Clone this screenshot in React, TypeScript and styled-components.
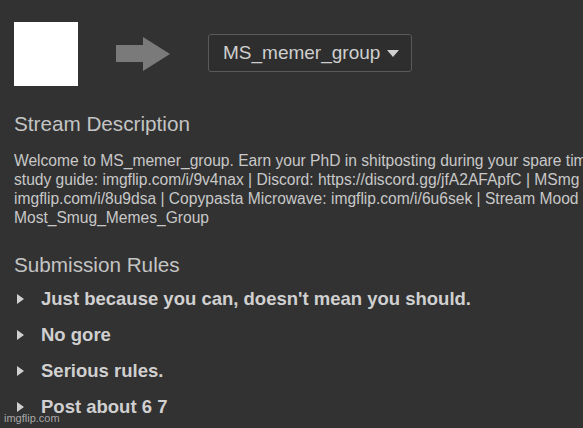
import styled, { createGlobalStyle } from "styled-components";

const GlobalStyle = createGlobalStyle`
    html, body {
        margin: 0;
        padding: 0;
        background: #323232;
        overflow: hidden;
    }
    body {
        font-family: "Liberation Sans", Arial, sans-serif;
        color: #cccccc;
    }
`

const Page = styled.div`
    position: relative;
    width: 583px;
    height: 428px;
    padding: 22px 14px 0;
    box-sizing: border-box;
`

/* Header: template image -> stream picker */

const Header = styled.div`
    display: flex;
    align-items: center;
    height: 64px;
    gap: 38px;
`

const Thumb = styled.div`
    width: 64px;
    height: 64px;
    background: #ffffff;
`

const Arrow = () => (
    <svg width="54" height="34" viewBox="0 0 54 34">
        <polygon points="0,8 27,8 27,0 54,17 27,34 27,25 0,25" fill="#7a7a7a" />
    </svg>
)

const StreamSelect = styled.button`
    display: flex;
    align-items: center;
    gap: 7px;
    height: 38px;
    margin-bottom: 3px;
    padding: 0 12px 0 14px;
    background: #2e2e2e;
    border: 1px solid #5a5a5a;
    border-radius: 3px;
    color: #cfcfcf;
    font-family: "Liberation Sans", Arial, sans-serif;
    font-size: 19px;
`

const Caret = styled.span`
    width: 0;
    height: 0;
    margin-top: 1px;
    border-left: 6px solid transparent;
    border-right: 6px solid transparent;
    border-top: 7px solid #d0d0d0;
`

/* Sections */

const SectionTitle = styled.h2<{ $top: number }>`
    margin: ${({ $top }) => $top}px 0 0;
    font-size: 20.7px;
    line-height: 24px;
    font-weight: normal;
    color: #c4c4c4;
`

const Description = styled.p`
    margin: 15px 0 0;
    font-size: 15.6px;
    line-height: 19px;
    white-space: nowrap;
    color: #c8c8c8;
`

const Rules = styled.ul`
    list-style: none;
    margin: 12px 0 0;
    padding: 0;
`

const Rule = styled.li`
    display: flex;
    align-items: center;
    height: 20px;
    margin-bottom: 16px;
    font-size: 18.5px;
    font-weight: bold;
    color: #d0d0d0;
    &::before {
        content: "";
        width: 0;
        height: 0;
        margin: 0 17px 0 3px;
        border-top: 5px solid transparent;
        border-bottom: 5px solid transparent;
        border-left: 7px solid #d0d0d0;
    }
`

const Watermark = styled.div`
    position: absolute;
    left: 4px;
    bottom: 4px;
    font-size: 11px;
    color: rgba(220, 220, 220, 0.7);
`

const rules = [
    "Just because you can, doesn't mean you should.",
    "No gore",
    "Serious rules.",
    "Post about 6 7",
]

export default function App() {
    return (
        <>
            <GlobalStyle />
            <Page>
                <Header>
                    <Thumb />
                    <Arrow />
                    <StreamSelect>
                        MS_memer_group
                        <Caret />
                    </StreamSelect>
                </Header>

                <SectionTitle $top={26}>Stream Description</SectionTitle>
                <Description>
                    Welcome to MS_memer_group. Earn your PhD in shitposting during your spare time!
                    <br />
                    study guide: imgflip.com/i/9v4nax | Discord: https://discord.gg/jfA2AFApfC | MSmg
                    <br />
                    imgflip.com/i/8u9dsa | Copypasta Microwave: imgflip.com/i/6u6sek | Stream Mood
                    <br />
                    Most_Smug_Memes_Group
                </Description>

                <SectionTitle $top={26}>Submission Rules</SectionTitle>
                <Rules>
                    {rules.map((rule) => (
                        <Rule key={rule}>{rule}</Rule>
                    ))}
                </Rules>

                <Watermark>imgflip.com</Watermark>
            </Page>
        </>
    )
}
